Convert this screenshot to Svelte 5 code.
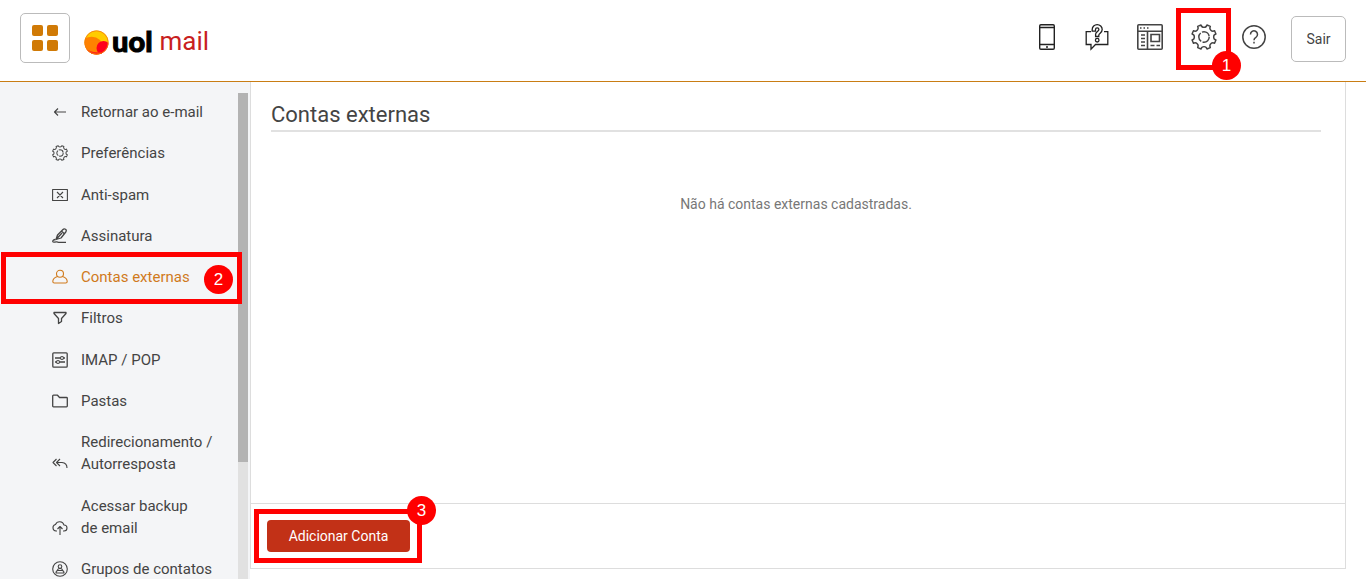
<script>
  const polar = (radius, degrees) => {
    const angle = (degrees * Math.PI) / 180;
    return `${(radius * Math.cos(angle)).toFixed(2)} ${(radius * Math.sin(angle)).toFixed(2)}`;
  };

  // Eight flat teeth separated by round notches, centred on the origin.
  const gearPath =
    Array.from({ length: 8 }, (_, i) => {
      const notch = i * 45;
      const start = `${i ? 'L' : 'M'}${polar(12.8, notch - 14)}`;
      return `${start}A3.2 3.2 0 0 0 ${polar(12.8, notch + 14)}`;
    }).join('') + 'Z';

  const items = [
    { id: 'back', label: 'Retornar ao e-mail' },
    { id: 'gear', label: 'Preferências' },
    { id: 'spam', label: 'Anti-spam' },
    { id: 'sign', label: 'Assinatura' },
    { id: 'user', label: 'Contas externas', active: true, step: 2 },
    { id: 'filter', label: 'Filtros' },
    { id: 'imap', label: 'IMAP / POP' },
    { id: 'folder', label: 'Pastas' },
    { id: 'reply', label: 'Redirecionamento\u00a0/ Autorresposta' },
    { id: 'cloud', label: 'Acessar backup de\u00a0email' },
    { id: 'group', label: 'Grupos de contatos' }
  ];
</script>

<div class="page">
  <header>
    <button class="apps" aria-label="Aplicativos">
      <svg width="26" height="26" viewBox="0 0 26 26" fill="#d07a06">
        <rect width="11" height="11" rx="2" /><rect x="15" width="11" height="11" rx="2" />
        <rect y="15" width="11" height="11" rx="2" /><rect x="15" y="15" width="11" height="11" rx="2" />
      </svg>
    </button>
    <a class="logo" href="#inicio">
      <svg width="25" height="25" viewBox="0 0 25 25">
        <defs><clipPath id="ball"><circle cx="12.5" cy="12.5" r="12" /></clipPath></defs>
        <g clip-path="url(#ball)">
          <rect width="25" height="25" fill="#fc0" />
          <path d="M0 9q9-5 16 1 4 4 2 15H0z" fill="#ff8200" />
          <circle cx="19.500" cy="18" r="7" fill="#ff001c" />
          <path d="M1 18q5 5 16 4v4H1z" fill="#ff2a14" />
        </g>
        <circle cx="12.5" cy="12.5" r="11.7" fill="none" stroke="#f47a10" stroke-width=".8" />
      </svg>
      <span class="uol">uol</span>
      <span class="mail">mail</span>
    </a>
    <div class="actions">
      <div class="tools">
        <button aria-label="Celular">
          <svg width="20" height="28" viewBox="0 0 20 28" fill="none" stroke="#222" stroke-width="1.4">
            <rect x="2.700" y="1.700" width="14.600" height="24.600" rx="1.200" />
            <path d="M3 4.500h14M3 21.500h14" /><path d="M9 24h2" />
          </svg>
        </button>
        <button aria-label="Suporte">
          <svg width="24" height="28" viewBox="0 0 24 28" fill="none" stroke="#222" stroke-width="1.3">
            <path d="M6 8.700H1.200v12.800H6v4.600l4.500-4.600h12.300V8.700H19" />
            <path d="M7.200 8.200V6.600a5 5 0 0 1 10 0c0 3.600-3.400 3.400-3.400 5.600v1.300h-3.200v-2.200c0-2.800 3.300-2.800 3.300-4.700a1.700 1.700 0 0 0-3.400 0v1.600z" />
            <circle cx="12.200" cy="17.200" r="1.800" />
          </svg>
        </button>
        <button aria-label="Layout">
          <svg width="26" height="28" viewBox="0 0 26 28" fill="none" stroke="#444" stroke-width="1.600">
            <rect x=".8" y="1.800" width="24.400" height="24.400" rx="1" />
            <path d="M1 8.300h24M10.500 8v18M14 11.500h8.500v7H14zM13.500 22.500h4M19.500 22.500h3.500M4 12h4M4 15.500h4M4 19h4M4 22.500h4" />
            <path d="M3 5h1.500M6.500 5H8M10 5h1.500" />
          </svg>
        </button>
        <button class="marked" aria-label="Configurações">
          <svg width="26" height="28" viewBox="-13.500 -13.500 27 27" fill="none" stroke="#444" stroke-width="1.500" stroke-linejoin="round">
            <path d={gearPath} />
            <circle r="5.400" stroke-dasharray="9.800 1.510" />
          </svg>
          <span class="frame gear-frame"><span class="step">1</span></span>
        </button>
      </div>
      <button aria-label="Ajuda">
        <svg width="24" height="28" viewBox="0 0 24 28" fill="none" stroke="#444" stroke-width="1.5">
          <circle cx="12" cy="14" r="11.200" />
          <path d="M8.500 11.500a3.500 3.500 0 1 1 5.400 2.800c-1.300.8-1.900 1.400-1.900 3" /><path d="M12 18.800v1.700" />
        </svg>
      </button>
      <button class="exit">Sair</button>
    </div>
  </header>

  <div class="body">
    <aside>
      <nav>
        {#each items as item}
          <a href={'#' + item.id} class:active={item.active}>
            <svg width="16" height="16" viewBox="0 0 16 16" fill="none" stroke="currentColor" stroke-width="1.1" stroke-linejoin="round">
              {#if item.id === 'back'}
                <path d="M14 8H2.500M6 4.500 2.500 8 6 11.500" />
              {:else if item.id === 'gear'}
                <g transform="translate(8 8) scale(.59)" stroke-width="1.700">
                  <path d={gearPath} />
                  <circle r="5.400" stroke-dasharray="9.800 1.510" />
                </g>
              {:else if item.id === 'spam'}
                <path d="M.6 2.500h14.800v11H.6zM5 5l6 6M11 5l-6 6" />
              {:else if item.id === 'sign'}
                <path d="M4 11.500 5.500 7l5.500-5.500q1-1 2.500-.2 1.400 1 .3 2.700L9 10zM4 11.500 10 5M9.500 3l3 3" stroke-width="1.300" />
                <path d="M3.500 11.500q-3 .5-2.700 2c.4 1.500 2.500 0 4 .4s3 .8 4.200.4h5" stroke-width="1.300" />
              {:else if item.id === 'user'}
                <circle cx="8" cy="4.800" r="3.500" />
                <path d="M5.500 7.500C2.500 8.500.8 10 .8 12.500q0 1.500 1.500 1.500h11.400q1.500 0 1.500-1.500c0-2.500-1.700-4-4.700-5" />
              {:else if item.id === 'filter'}
                <path d="M2 2.500h12v1L9.500 8.500v3L6.500 13.500v-5L2 3.500z" stroke-width="1.300" />
              {:else if item.id === 'imap'}
                <rect x=".8" y=".8" width="14.400" height="14.400" rx="1" stroke-width="1.300" />
                <path d="M3 6h5.500M11.500 6H13M3 10h1.500M7.500 10H13" stroke-width="1.300" />
                <circle cx="10" cy="6" r="1.500" /><circle cx="6" cy="10" r="1.500" />
              {:else if item.id === 'folder'}
                <path d="M.7 13V3q0-.8.8-.8h4l2 2.300h7q.8 0 .8.800V13q0 .8-.8.8h-13Q.7 13.800.7 13z" stroke-width="1.300" />
              {:else if item.id === 'reply'}
                <path d="M4.500 3 1 6.500 4.500 10M8 3 4.500 6.500 8 10M4.500 6.500H10q5 .5 5 5.500" />
              {:else if item.id === 'cloud'}
                <path d="M5 11H4a3.300 3.300 0 0 1-.5-6.500A4.500 4.500 0 0 1 12 5a3 3 0 0 1 0 6h-1M8 15V6.500M5.500 9 8 6.500 10.500 9" />
              {:else}
                <circle cx="8" cy="8" r="7.300" /><circle cx="8" cy="5.500" r="1.800" />
                <path d="M5.500 9.500q0-2 2.500-2t2.500 2zM4 12q0-2.500 2-2.500h4q2 0 2 2.500z" />
              {/if}
            </svg>
            <span class="label">{item.label}</span>
            {#if item.step}
              <span class="frame nav-frame"><span class="step">{item.step}</span></span>
            {/if}
          </a>
        {/each}
      </nav>
      <div class="track"><div class="thumb"></div></div>
    </aside>

    <main>
      <section>
        <h1>Contas externas</h1>
        <p>Não há contas externas cadastradas.</p>
      </section>
      <footer>
        <div class="marked">
          <button class="add">Adicionar Conta</button>
          <span class="frame add-frame"><span class="step">3</span></span>
        </div>
      </footer>
    </main>
  </div>
</div>

<style>
  :global(body) { margin: 0; background: #fff; }
  .page {
    display: flex;
    flex-direction: column;
    height: 100vh;
    overflow: hidden;
    color: #444;
    font-family: Roboto, "Open Sans", sans-serif;
  }
  button { font: inherit; color: inherit; background: none; border: 0; padding: 0; cursor: pointer; }
  svg { display: block; flex: none; }
  a { color: inherit; text-decoration: none; }
  header {
    display: flex;
    align-items: flex-start;
    padding: 13px 20px 12px;
    border-bottom: 1px solid #c97d14;
  }
  .apps {
    display: grid;
    place-items: center;
    width: 50px;
    height: 50px;
    border: 1px solid #bbb;
    border-radius: 5px;
  }
  .logo { display: flex; align-items: center; height: 56px; margin-left: 14px; }
  .logo svg { margin-top: 2px; }
  .uol {
    margin-left: 3px;
    font: 900 29px/32px Lato, sans-serif;
    color: #000;
    -webkit-text-stroke: 1px #000;
  }
  .mail { margin-left: 7px; font: 400 26px/32px Roboto, sans-serif; color: #c81f1f; }
  .actions { display: flex; align-items: center; gap: 25px; margin: 3px 0 0 auto; }
  .actions svg { margin-top: -4px; }
  .tools { display: flex; gap: 28px; }
  .exit {
    width: 55px;
    height: 46px;
    border: 1px solid #bbb;
    border-radius: 5px;
    font-size: 14px;
  }
  .body { display: flex; flex: 1; min-height: 0; }
  aside { display: flex; width: 250px; flex: none; background: #f4f5f7; }
  nav {
    display: flex;
    flex-direction: column;
    justify-content: space-between;
    flex: 1;
    margin: 19px 0 -1px;
    font-size: 15px;
    line-height: 22px;
  }
  nav a { position: relative; display: flex; align-items: flex-end; gap: 13px; padding: 0 20px 0 52px; }
  nav svg { margin-bottom: 3px; }
  .active { color: #d07a1c; }
  .track { width: 10px; margin: 11px 2px 0 0; background: #e1e1e1; }
  .thumb { height: 76%; background: #b3b3b3; }
  main {
    display: flex;
    flex-direction: column;
    flex: 1;
    margin: 0 20px 10px 0;
    border: 1px solid #ddd;
    border-top: 0;
  }
  section { flex: 1; padding: 18px 24px 0 20px; }
  h1 {
    margin: 0;
    border-bottom: 2px solid #e1e1e1;
    font-size: 22px;
    font-weight: 400;
    line-height: 30px;
  }
  p { margin: 62px 0 0; text-align: center; font-size: 14px; line-height: 20px; color: #777; }
  footer { display: flex; padding: 16px; border-top: 1px solid #ddd; }
  .marked { position: relative; }
  .add {
    width: 143px;
    height: 32px;
    border-radius: 4px;
    background: #c23117;
    color: #fff;
    font-size: 14px;
  }
  .frame { position: absolute; z-index: 1; box-sizing: border-box; border: 5px solid #f00; pointer-events: none; }
  .step {
    position: absolute;
    width: 29px;
    height: 29px;
    border-radius: 50%;
    background: #f00;
    color: #fff;
    font: 17px/29px "Liberation Sans", Arial, sans-serif;
    text-align: center;
  }
  .gear-frame { inset: -19px -14px -19px -15px; }
  .gear-frame .step { right: -15px; bottom: -15px; }
  .nav-frame { inset: -14px -4px -16px 1px; }
  .nav-frame .step { right: 4px; top: 8px; }
  .add-frame { inset: -11px -12px -11px -13px; }
  .add-frame .step { right: -19px; top: -18px; }
</style>
